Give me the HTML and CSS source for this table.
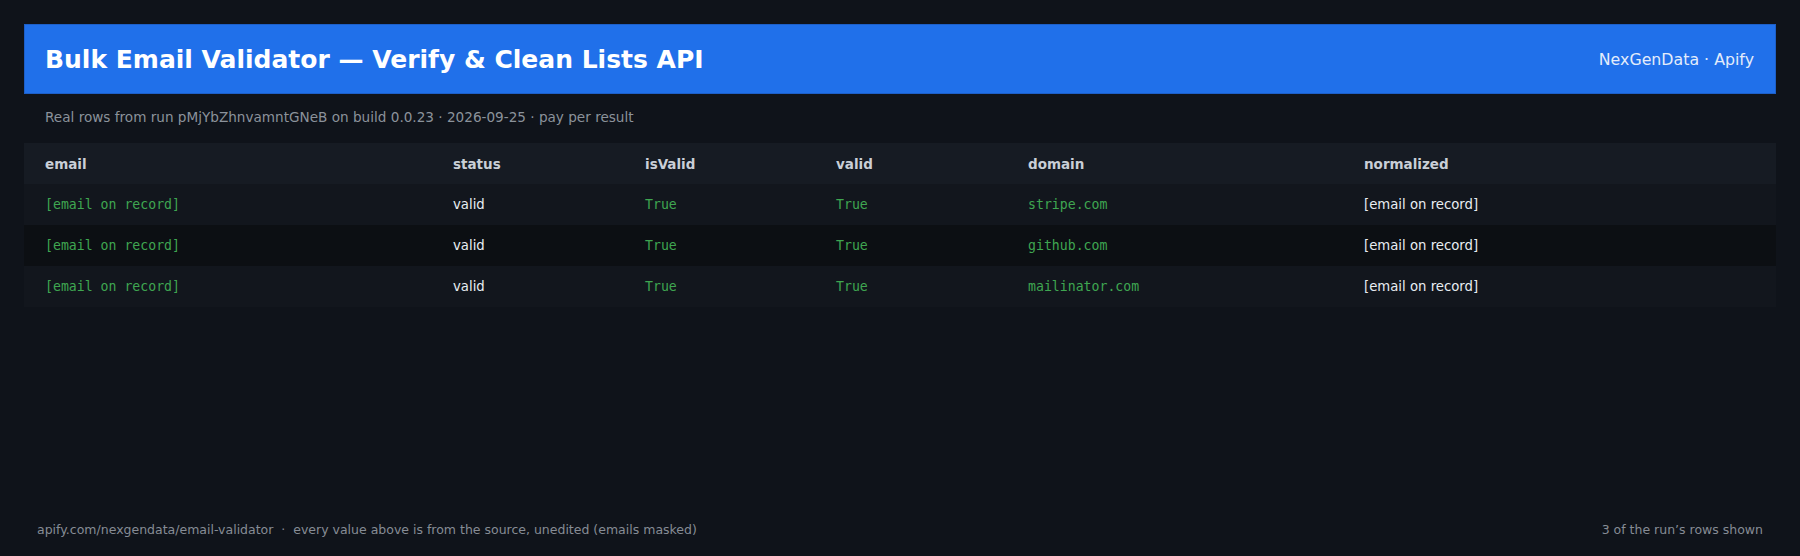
FILE: index.html
```html
<!DOCTYPE html>
<html lang="en">
<head>
<meta charset="utf-8">
<title>Bulk Email Validator</title>
<link rel="stylesheet" href="styles.css">
</head>
<body>
<div class="page">
  <header class="banner">
    <h1 class="title">Bulk Email Validator — Verify &amp; Clean Lists API</h1>
    <div class="brand">NexGenData · Apify</div>
  </header>
  <p class="subtitle">Real rows from run pMjYbZhnvamntGNeB on build 0.0.23 · 2026-09-25 · pay per result</p>
  <table class="grid">
    <colgroup>
      <col class="c-email"><col class="c-status"><col class="c-isvalid"><col class="c-valid"><col class="c-domain"><col class="c-norm">
    </colgroup>
    <thead>
      <tr><th>email</th><th>status</th><th>isValid</th><th>valid</th><th>domain</th><th>normalized</th></tr>
    </thead>
    <tbody>
      <tr><td class="mono">[email on record]</td><td>valid</td><td class="mono">True</td><td class="mono">True</td><td class="mono">stripe.com</td><td>[email on record]</td></tr>
      <tr><td class="mono">[email on record]</td><td>valid</td><td class="mono">True</td><td class="mono">True</td><td class="mono">github.com</td><td>[email on record]</td></tr>
      <tr><td class="mono">[email on record]</td><td>valid</td><td class="mono">True</td><td class="mono">True</td><td class="mono">mailinator.com</td><td>[email on record]</td></tr>
    </tbody>
  </table>
  <footer class="foot">
    <span>apify.com/nexgendata/email-validator &nbsp;·&nbsp; every value above is from the source, unedited (emails masked)</span>
    <span>3 of the run’s rows shown</span>
  </footer>
</div>
</body>
</html>
```

FILE: styles.css
```css
* { box-sizing: border-box; }
html, body {
  margin: 0;
  padding: 0;
  background: #0f131a;
  font-family: "DejaVu Sans", "Liberation Sans", sans-serif;
}
.page {
  width: 1800px;
  height: 556px;
  padding: 24px 24px 18px;
  display: flex;
  flex-direction: column;
}
.banner {
  height: 70px;
  background: #2070ea;
  border: 1px solid #1d5fc8;
  display: flex;
  align-items: center;
  justify-content: space-between;
  padding: 0 21px 0 20px;
}
.title {
  margin: 0;
  font-size: 25px;
  font-weight: bold;
  color: #ffffff;
}
.brand {
  font-size: 15.8px;
  color: #e3ecfb;
}
.subtitle {
  margin: 0;
  padding: 14px 21px 16px;
  line-height: 19px;
  font-size: 13.6px;
  color: #8b929b;
}
.grid {
  width: 1752px;
  border-collapse: collapse;
  table-layout: fixed;
}
.c-email { width: 409px; }
.c-status { width: 192px; }
.c-isvalid { width: 191px; }
.c-valid { width: 192px; }
.c-domain { width: 336px; }
.c-norm { width: 432px; }
.grid th, .grid td {
  height: 41px;
  padding: 0 20px;
  text-align: left;
  vertical-align: middle;
  white-space: nowrap;
}
.grid th:first-child, .grid td:first-child { padding-left: 21px; }
.grid thead tr { background: #161b23; }
.grid th {
  font-size: 13.5px;
  font-weight: bold;
  color: #c9cfd7;
}
.grid tbody tr { background: #12161d; }
.grid tbody tr:nth-child(2) { background: #0c0f13; }
.grid td {
  font-size: 13.25px;
  color: #e8edf2;
}
.grid td.mono {
  font-family: "DejaVu Sans Mono", "Liberation Mono", monospace;
  font-size: 13.2px;
  color: #3fa651;
}
.foot {
  margin-top: auto;
  display: flex;
  justify-content: space-between;
  padding: 0 13px;
  line-height: 16px;
  font-size: 12.5px;
  color: #868c95;
}
```
